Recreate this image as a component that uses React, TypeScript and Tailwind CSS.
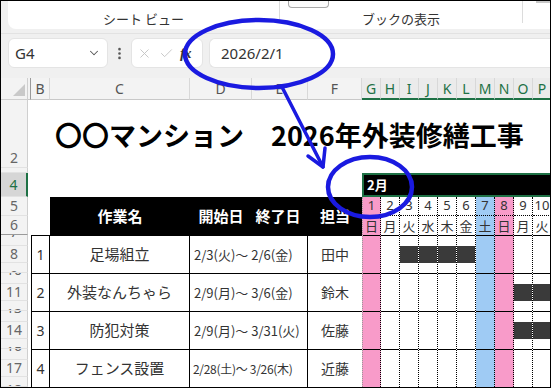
import React from "react";
import { ChevronDown, EllipsisVertical, X, Check } from "lucide-react";

type Day = { n: string; w: string; bg: string; first?: boolean };

const days: Day[] = [
  { n: "1", w: "日", bg: "bg-[#f89bc9]", first: true },
  { n: "2", w: "月", bg: "" },
  { n: "3", w: "火", bg: "" },
  { n: "4", w: "水", bg: "" },
  { n: "5", w: "木", bg: "" },
  { n: "6", w: "金", bg: "" },
  { n: "7", w: "土", bg: "bg-[#9fcbf4]" },
  { n: "8", w: "日", bg: "bg-[#f89bc9]" },
  { n: "9", w: "月", bg: "" },
  { n: "10", w: "火", bg: "" },
];

const dayCol = [
  "col-start-8",
  "col-start-9",
  "col-start-10",
  "col-start-11",
  "col-start-12",
  "col-start-13",
  "col-start-14",
  "col-start-15",
  "col-start-16",
  "col-start-17",
];

const tasks = [
  { no: "1", name: "足場組立", date: "2/3(火)～ 2/6(金)", who: "田中", bar: [3, 4, 5, 6], row: "row-start-7", small: false },
  { no: "2", name: "外装なんちゃら", date: "2/9(月)～ 3/6(金)", who: "鈴木", bar: [9, 10], row: "row-start-10", small: false },
  { no: "3", name: "防犯対策", date: "2/9(月)～ 3/31(火)", who: "佐藤", bar: [9, 10], row: "row-start-13", small: false },
  { no: "4", name: "フェンス設置", date: "2/28(土)～ 3/26(木)", who: "近藤", bar: [] as number[], row: "row-start-16", small: true },
];

const colHeaders = [
  { c: "col-start-2", t: "", sel: false },
  { c: "col-start-3", t: "B", sel: false },
  { c: "col-start-4", t: "C", sel: false },
  { c: "col-start-5", t: "D", sel: false },
  { c: "col-start-6", t: "E", sel: false },
  { c: "col-start-7", t: "F", sel: false },
  { c: "col-start-8", t: "G", sel: true },
  { c: "col-start-9", t: "H", sel: true },
  { c: "col-start-10", t: "I", sel: true },
  { c: "col-start-11", t: "J", sel: true },
  { c: "col-start-12", t: "K", sel: true },
  { c: "col-start-13", t: "L", sel: true },
  { c: "col-start-14", t: "M", sel: true },
  { c: "col-start-15", t: "N", sel: true },
  { c: "col-start-16", t: "O", sel: true },
  { c: "col-start-17", t: "P", sel: true },
];

type RH = { r: string; n: string; mode?: "end" | "sel" | "up" | "down"; freeze?: boolean };
const rowHeaders: RH[] = [
  { r: "row-start-2", n: "2", mode: "end" },
  { r: "row-start-3", n: "3", mode: "end" },
  { r: "row-start-4", n: "4", mode: "sel" },
  { r: "row-start-5", n: "5" },
  { r: "row-start-6", n: "6", freeze: true },
  { r: "row-start-7", n: "7", mode: "up" },
  { r: "row-start-8", n: "8" },
  { r: "row-start-9", n: "9", mode: "down" },
  { r: "row-start-10", n: "10", mode: "up" },
  { r: "row-start-11", n: "11" },
  { r: "row-start-12", n: "12", mode: "down" },
  { r: "row-start-13", n: "13", mode: "up" },
  { r: "row-start-14", n: "14" },
  { r: "row-start-15", n: "15", mode: "down" },
  { r: "row-start-16", n: "16", mode: "up" },
  { r: "row-start-17", n: "17" },
  { r: "row-start-18", n: "18", mode: "down" },
];

function TopBar() {
  return (
    <div className="h-[77px] bg-[#f0f0f0] flex flex-col">
      <div className="ml-[7px] h-[28px] bg-white rounded-bl-[8px] flex">
        <div className="w-[272px] flex items-end justify-center pb-[2px] text-[13px] leading-[16px] text-[#333]">
          シート ビュー
        </div>
        <div className="w-px h-[22px] bg-[#dcdcdc]" />
        <div className="w-[243px] flex flex-col items-center">
          <div className="self-start ml-[8px] w-[41px] h-[7px] border border-t-0 border-[#a8a8a8] rounded-b-[4px] bg-[#fbfbfb]" />
          <div className="mt-auto pb-[2px] text-[13px] leading-[16px] text-[#333]">ブックの表示</div>
        </div>
        <div className="w-px h-[22px] bg-[#dcdcdc]" />
        <div className="flex-1 flex">
          <div className="ml-[13px] w-[14px] h-[2px] bg-[#c8c8c8]" />
        </div>
      </div>
      <div className="mt-[4px] h-px bg-[#e2e2e2]" />
      <div className="mt-[4px] h-[30px] flex items-stretch">
        <div className="ml-[7px] w-[100px] bg-white rounded-[6px] border border-[#e4e4e4] flex items-center pl-[6px] pr-[6px] font-['Noto_Sans',sans-serif] text-[15px] text-[#333]">
          <span>G4</span>
          <ChevronDown className="ml-auto" size={14} color="#555" strokeWidth={1.75} />
        </div>
        <div className="w-[23px] flex items-center justify-center">
          <EllipsisVertical size={15} color="#555" strokeWidth={2.25} />
        </div>
        <div className="w-[72px] bg-white rounded-[6px] border border-[#e4e4e4] flex items-center">
          <X className="ml-[5px]" size={15} color="#c4c4c4" strokeWidth={1.5} />
          <Check className="ml-[7px]" size={15} color="#c4c4c4" strokeWidth={1.5} />
          <span className="ml-[6px] italic font-bold font-['Liberation_Serif',serif] text-[15px] text-[#333] tracking-[-1px]">fx</span>
        </div>
        <div className="ml-[6px] flex-1 bg-white rounded-l-[6px] border border-r-0 border-[#e4e4e4] flex items-center pl-[11px] font-['Noto_Sans',sans-serif] text-[15px] text-[#333]">
          2026/2/1
        </div>
      </div>
    </div>
  );
}

function Sheet() {
  return (
    <div className="grid grid-cols-[27px_3px_19px_140px_62px_56px_54px_repeat(10,19px)] grid-rows-[22px_68px_5px_24px_19px_19px_repeat(4,11px_17px_10px)]">
      {/* corner */}
      <div className="col-start-1 row-start-1 bg-[#f3f3f3] border-r border-b border-[#cfcfcf] flex items-end justify-end pr-[2px] pb-[3px]">
        <svg width="12" height="12" viewBox="0 0 12 12">
          <polygon points="12,0 12,12 0,12" fill="#c9c9c9" />
        </svg>
      </div>
      {colHeaders.map((h) => (
        <div
          key={h.c}
          className={`${h.c} row-start-1 flex items-center justify-center font-['Noto_Sans',sans-serif] text-[14px] border-r border-[#d8d8d8] ${
            h.sel
              ? "bg-[#ebebeb] text-[#1e7145] border-b-2 border-b-[#1e7145]"
              : "bg-[#f3f3f3] text-[#555] border-b border-b-[#c8c8c8]"
          } ${h.t === "" ? "border-r-[#9a9a9a]" : ""}`}
        >
          {h.t}
        </div>
      ))}

      {/* row headers */}
      {rowHeaders.map((h) => (
        <div
          key={h.r}
          className={`${h.r} col-start-1 overflow-hidden flex justify-center font-['Noto_Sans',sans-serif] text-[14px] leading-[14px] ${
            h.mode === "sel"
              ? "bg-[#d6d6d6] text-[#1e7145] border-r-2 border-r-[#1e7145] items-center"
              : "bg-[#f3f3f3] text-[#666] border-r border-r-[#cfcfcf]"
          } ${h.mode === "end" ? "items-end pb-[2px]" : h.mode === "sel" ? "" : "items-center"} ${
            h.freeze ? "border-b border-b-[#9a9a9a]" : "border-b border-b-[#e2e2e2]"
          }`}
        >
          <span
            className={
              h.mode === "up" ? "-translate-y-[8px]" : h.mode === "down" ? "translate-y-[8px]" : ""
            }
          >
            {h.n}
          </span>
        </div>
      ))}

      {/* title */}
      <div className="col-start-3 col-span-15 row-start-2 flex items-center pl-[24px] pt-[2px] whitespace-nowrap overflow-hidden text-[27px] font-bold text-black">
        〇〇マンション　2026年外装修繕工事　～工程表～
      </div>

      {/* month band */}
      <div className="col-start-8 col-span-10 row-start-4 bg-black border-2 border-[#1e7145] flex items-center pl-[3px] text-white font-bold text-[13px]">
        2月
      </div>

      {/* table header */}
      <div className="col-start-4 row-start-5 row-span-2 bg-black text-white font-bold text-[15px] flex items-center justify-center">
        作業名
      </div>
      <div className="col-start-5 row-start-5 row-span-2 bg-black text-white font-bold text-[15px] flex items-center justify-center">
        開始日
      </div>
      <div className="col-start-6 row-start-5 row-span-2 bg-black text-white font-bold text-[15px] flex items-center justify-center pr-[4px]">
        終了日
      </div>
      <div className="col-start-7 row-start-5 row-span-2 bg-black text-white font-bold text-[15px] flex items-center justify-center">
        担当
      </div>

      {/* tasks */}
      {tasks.map((t) => (
        <React.Fragment key={t.no}>
          <div className={`${t.row} col-start-3 row-span-3 border-l border-t border-r border-black flex items-center justify-center font-['Noto_Sans',sans-serif] text-[14px] text-[#333]`}>
            {t.no}
          </div>
          <div className={`${t.row} col-start-4 row-span-3 border-t border-r border-black flex items-center justify-center text-[15px] text-[#333]`}>
            {t.name}
          </div>
          <div
            className={`${t.row} col-start-5 col-span-2 row-span-3 border-t border-r border-black flex items-center whitespace-nowrap overflow-hidden text-[#333] ${
              t.small ? "pl-[3px] text-[12px] tracking-[-0.3px]" : "pl-[4px] text-[13px]"
            }`}
          >
            {t.date}
          </div>
          <div className={`${t.row} col-start-7 row-span-3 border-t border-black flex items-center justify-center text-[14px] text-[#333]`}>
            {t.who}
          </div>
        </React.Fragment>
      ))}

      {/* gantt day columns */}
      {days.map((d, i) => (
        <div
          key={d.n}
          className={`${dayCol[i]} row-start-5 row-span-14 flex flex-col border-r border-dotted border-r-black ${d.bg} ${
            d.first ? "border-l border-l-[#9a9a9a]" : ""
          }`}
        >
          <div className="h-[19px] shrink-0 border-b border-dotted border-b-black flex items-center justify-center font-['Noto_Sans',sans-serif] text-[13px] text-[#333]">
            {d.n}
          </div>
          <div className="h-[19px] shrink-0 flex items-center justify-center text-[13px] text-[#333]">{d.w}</div>
          {tasks.map((t) => (
            <div key={t.no} className="h-[38px] shrink-0 border-t border-black pt-[10px]">
              {t.bar.includes(i + 1) && <div className="h-[17px] bg-[#3a3a3a]" />}
            </div>
          ))}
        </div>
      ))}
    </div>
  );
}

function Annotations() {
  const c = "#1a1ae0";
  return (
    <svg
      className="absolute -left-px -top-px pointer-events-none"
      width="551"
      height="388"
      viewBox="0 0 551 388"
    >
      <ellipse cx="259" cy="54" rx="74" ry="34" fill="none" stroke={c} strokeWidth="4.5" />
      <line x1="282" y1="87" x2="323" y2="167" stroke={c} strokeWidth="3.5" strokeLinecap="round" />
      <polyline points="308,156 323,167 325,148" fill="none" stroke={c} strokeWidth="3.5" strokeLinecap="round" strokeLinejoin="round" />
      <ellipse cx="370" cy="187" rx="42" ry="30" fill="none" stroke={c} strokeWidth="4.5" />
    </svg>
  );
}

export default function App() {
  return (
    <div className="relative w-[551px] h-[388px] overflow-hidden border border-black bg-white font-['Noto_Sans_CJK_JP',sans-serif] text-[#333]">
      <TopBar />
      <Sheet />
      <Annotations />
    </div>
  );
}
